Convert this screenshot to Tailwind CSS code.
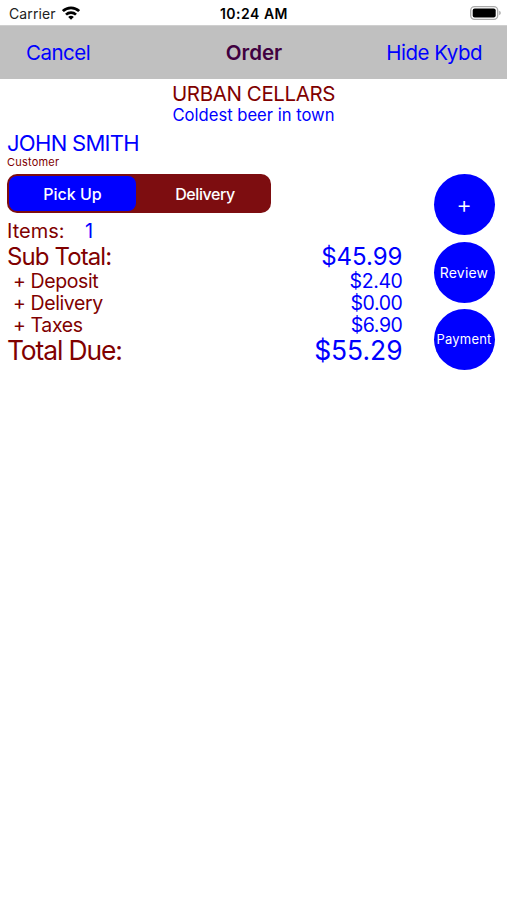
<!DOCTYPE html>
<html lang="en">

<head>
    <meta charset="UTF-8">
    <meta name="viewport" content="width=device-width, initial-scale=1.0">
    <title>Order</title>
    <script src="https://cdn.jsdelivr.net/npm/@tailwindcss/browser@4"></script>
</head>

<body class="bg-white h-screen overflow-hidden font-['Inter','Liberation_Sans',sans-serif] text-[#0000ff] whitespace-nowrap">
    <!-- Status bar -->
    <div class="h-[25px] pt-[3px] pl-[9px] pr-[6px] grid grid-cols-3 items-center text-black">
        <div class="flex items-center gap-[6px]">
            <span class="text-[14px] leading-5 tracking-[0.1px] text-[#222]">Carrier</span>
            <svg class="w-[18px] h-[14px] -mt-[3px]" viewBox="0 0 18 14" fill="none" stroke="black" stroke-width="2.7">
                <path d="M.9 5.1a11.6 11.6 0 0 1 16.2 0" />
                <path d="M4 8.6a7.2 7.2 0 0 1 10 0" />
                <path d="M9 13.8 6.2 11a3.9 3.9 0 0 1 5.6 0Z" fill="black" stroke="none" />
            </svg>
        </div>
        <div class="-ml-[2px] text-center text-[14px] leading-5 tracking-[0.5px] font-semibold">10:24 AM</div>
        <svg class="justify-self-end w-[31px] h-[14px] -mt-[3px]" viewBox="0 0 31 14">
            <rect x=".7" y=".7" width="27" height="12.6" rx="3.8" fill="white" stroke="#aaa" stroke-width="1.3" />
            <rect x="2.7" y="2.6" width="23" height="8.8" rx="2" fill="black" />
            <path d="M29.2 4.8q1.6.6 1.6 2.2t-1.6 2.2Z" fill="#aaa" />
        </svg>
    </div>

    <!-- Navigation bar -->
    <nav class="h-[54px] pt-[2px] pl-[26px] pr-[25px] grid grid-cols-3 items-center bg-[#c0c0c0] border-t border-[#cfcfcf] text-[20.5px] tracking-[-0.5px]">
        <button class="text-left">Cancel</button>
        <h1 class="text-center font-semibold tracking-normal text-[#400040]">Order</h1>
        <button class="text-right">Hide Kybd</button>
    </nav>

    <header class="pt-[3px] text-center">
        <div class="text-[20.5px] leading-[24px] tracking-[-0.4px] text-[#800000]">URBAN CELLARS</div>
        <div class="text-[16.6px] leading-[19px]">Coldest beer in town</div>
    </header>

    <main class="pl-[7px] pr-[12.5px] pt-[5px]">
        <div class="text-[22px] leading-[26px] tracking-[-0.7px]">JOHN SMITH</div>
        <div class="text-[11px] leading-[12px] tracking-[0.2px] text-[#800000]">Customer</div>

        <div class="mt-[6.4px] flex justify-between">
            <div class="w-[395.5px] text-[#800000]">
                <div class="w-[264px] h-[39px] p-[2px] flex rounded-[10px] bg-[#7d0d10] text-white text-[16px] font-medium">
                    <button class="w-[127px] rounded-[8px] bg-[#0000ff]">Pick Up</button>
                    <button class="flex-1 pl-[5px] tracking-[-0.4px]">Delivery</button>
                </div>

                <div class="mt-[5px] flex items-center text-[20px] leading-[26px]">
                    <span class="w-[78px]">Items:</span>
                    <span class="text-[#0000ff]">1</span>
                </div>
                <div class="-mt-[0.4px] flex justify-between text-[24px] leading-[25px]">
                    <span class="tracking-[-0.9px]">Sub Total:</span>
                    <span class="text-[#0000ff]">$45.99</span>
                </div>
                <div class="mt-[0.6px] pl-[6px] text-[19.5px] leading-[22px] tracking-[-0.4px]">
                    <div class="flex justify-between">
                        <span>+ Deposit</span>
                        <span class="text-[#0000ff]">$2.40</span>
                    </div>
                    <div class="flex justify-between">
                        <span>+ Delivery</span>
                        <span class="text-[#0000ff]">$0.00</span>
                    </div>
                    <div class="flex justify-between">
                        <span>+ Taxes</span>
                        <span class="text-[#0000ff]">$6.90</span>
                    </div>
                </div>
                <div class="-mt-[0.5px] flex justify-between text-[26.4px] leading-[30px]">
                    <span class="tracking-[-1.1px]">Total Due:</span>
                    <span class="text-[#0000ff]">$55.29</span>
                </div>
            </div>

            <div class="flex flex-col gap-[6.3px] text-white text-[14px]">
                <button class="size-[61px] pt-[1px] rounded-full bg-[#0000ff] text-[24px] font-light">+</button>
                <button class="size-[61px] rounded-full bg-[#0000ff] tracking-[0.2px]">Review</button>
                <button class="size-[61px] rounded-full bg-[#0000ff] text-[13px] tracking-[0.2px]">Payment</button>
            </div>
        </div>
    </main>
</body>

</html>
